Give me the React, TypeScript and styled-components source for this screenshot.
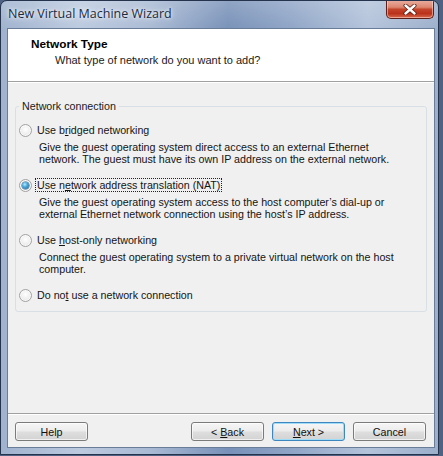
import React from "react";
import styled, { createGlobalStyle } from "styled-components";

const Global = createGlobalStyle`
  html, body { margin: 0; padding: 0; background: #4f6283; }
  body {
    width: 443px;
    height: 456px;
    overflow: hidden;
    font-family: "Open Sans", "Noto Sans", sans-serif;
    -webkit-font-smoothing: antialiased;
  }
`;

const UI_FONT = `"Liberation Sans", Arial, sans-serif`;
const FONT = "10.7px";

const Window = styled.div`
  width: 439px;
  height: 455px;
  box-sizing: border-box;
  border: 1px solid #25344c;
  border-radius: 7px 7px 0 0;
  background:
    linear-gradient(180deg, rgba(255,255,255,0.18) 0%, rgba(255,255,255,0) 30px),
    linear-gradient(90deg, #9fb2ce 0%, #bccadf 18%, #a9bad4 34%, #7891b8 52%, #8ea4c6 66%, #b3c3da 84%, #9cafcb 100%);
  display: flex;
  flex-direction: column;
  overflow: hidden;
`;

const TitleBar = styled.div`
  height: 27px;
  display: flex;
  align-items: flex-start;
  flex-shrink: 0;
`;

const TitleText = styled.div`
  padding-left: 7px;
  line-height: 26px;
  font-size: 12.5px;
  color: #1b2b3f;
  text-shadow: 0 0 6px rgba(255, 255, 255, 0.95), 0 0 3px rgba(255, 255, 255, 0.8);
  white-space: nowrap;
`;

const CloseButton = styled.div`
  width: 48px;
  height: 19px;
  margin: -1px 4px 0 auto;
  box-sizing: border-box;
  border: 1px solid #5a2019;
  border-top: none;
  border-radius: 0 0 5px 5px;
  background: linear-gradient(180deg, #eab0a2 0%, #dc8670 40%, #c4452b 52%, #b93219 75%, #d8694d 100%);
  box-shadow: inset 0 0 0 1px rgba(255, 220, 210, 0.55);
  display: flex;
  align-items: center;
  justify-content: center;
`;

const Client = styled.div`
  flex: 1;
  margin: 0 3px 6px 6px;
  border: 1px solid #6a7d98;
  background: #f0f0f0;
  display: flex;
  flex-direction: column;
  color: #141414;
  font-family: ${UI_FONT};
  font-size: ${FONT};
`;

const Header = styled.div`
  height: 52px;
  flex-shrink: 0;
  box-sizing: content-box;
  background: #ffffff;
  border-bottom: 1px solid #a0a0a0;
  box-shadow: 0 1px 0 #ffffff;
  display: flex;
  flex-direction: column;
`;

const HeaderTitle = styled.div`
  margin: 8px 0 0 23px;
  font-weight: 700;
  font-size: 11.8px;
  line-height: 14px;
  color: #000;
`;

const HeaderSub = styled.div`
  margin: 2px 0 0 47px;
  font-size: 11px;
  line-height: 14px;
  color: #1a1a1a;
`;

const Body = styled.div`
  flex: 1;
  padding: 18px 7px 0 7px;
  display: flex;
  flex-direction: column;
`;

const Group = styled.fieldset`
  margin: 0;
  border: 1px solid #d8dfe6;
  border-radius: 3px;
  padding: 11px 8px 9px 3px;
  min-width: 0;
`;

const Legend = styled.legend`
  padding: 0 3px;
  line-height: 12px;
  color: #1a1a1a;
`;

const Option = styled.div`
  display: flex;
  flex-direction: column;
  & + & {
    margin-top: 13px;
  }
`;

const OptionRow = styled.div`
  display: flex;
  align-items: center;
  height: 14px;
  gap: 4px;
`;

const Radio = styled.span<{ $checked?: boolean }>`
  width: 13px;
  height: 13px;
  box-sizing: border-box;
  border-radius: 50%;
  border: 1px solid #a2a2a2;
  background: radial-gradient(circle at 50% 40%, #ffffff 0%, #eeeeee 55%, #dcdcdc 100%);
  box-shadow: inset 0 0 0 1px rgba(255, 255, 255, 0.7);
  display: flex;
  align-items: center;
  justify-content: center;
  flex-shrink: 0;
  &::after {
    content: "";
    display: ${(p) => (p.$checked ? "block" : "none")};
    width: 7px;
    height: 7px;
    border-radius: 50%;
    background: radial-gradient(circle at 40% 35%, #b8ecfc 0%, #4aa8d8 40%, #1b5d94 100%);
    box-shadow: 0 0 0 0.5px #2a5f8c;
  }
`;

const OptionLabel = styled.span<{ $focused?: boolean }>`
  line-height: 12px;
  padding: 0 1px;
  white-space: nowrap;
  outline: ${(p) => (p.$focused ? "1px dotted #222" : "none")};
  outline-offset: 0;
`;

const Key = styled.u`
  text-decoration: underline;
  text-underline-offset: 1px;
`;

const Desc = styled.div`
  margin: 4px 0 0 20px;
  display: flex;
  flex-direction: column;
`;

const DescLine = styled.span`
  line-height: 12px;
  white-space: nowrap;
`;

const Footer = styled.div`
  flex-shrink: 0;
  border-top: 1px solid #a0a0a0;
  box-shadow: inset 0 1px 0 #ffffff;
  padding: 8px 8px 6px 7px;
  display: flex;
  align-items: center;
  gap: 8px;
`;

const Button = styled.div<{ $default?: boolean; $pushRight?: boolean }>`
  width: 73px;
  height: 19px;
  box-sizing: border-box;
  border: 1px solid ${(p) => (p.$default ? "#3d86be" : "#7b7b7b")};
  border-radius: 3px;
  background: linear-gradient(180deg, #f6f6f6 0%, #ececec 48%, #dedede 52%, #d3d3d3 100%);
  box-shadow: ${(p) =>
    p.$default
      ? "inset 0 0 0 1px #9fdcf7"
      : "inset 0 0 0 1px rgba(255,255,255,0.65)"};
  display: flex;
  align-items: center;
  justify-content: center;
  color: #111;
  line-height: 12px;
  white-space: pre;
  margin-left: ${(p) => (p.$pushRight ? "auto" : "0")};
`;

type Opt = {
  pre: string;
  key: string;
  post: string;
  desc: string[];
  checked?: boolean;
};

const options: Opt[] = [
  {
    pre: "Use b",
    key: "r",
    post: "idged networking",
    desc: [
      "Give the guest operating system direct access to an external Ethernet",
      "network. The guest must have its own IP address on the external network.",
    ],
  },
  {
    pre: "Use n",
    key: "e",
    post: "twork address translation (NAT)",
    desc: [
      "Give the guest operating system access to the host computer\u2019s dial-up or",
      "external Ethernet network connection using the host\u2019s IP address.",
    ],
    checked: true,
  },
  {
    pre: "Use ",
    key: "h",
    post: "ost-only networking",
    desc: [
      "Connect the guest operating system to a private virtual network on the host",
      "computer.",
    ],
  },
  {
    pre: "Do no",
    key: "t",
    post: " use a network connection",
    desc: [],
  },
];

const CloseIcon = () => (
  <svg width="14" height="11" viewBox="0 0 14 11">
    <path d="M2.5 1.5 L11.5 9.5 M11.5 1.5 L2.5 9.5" stroke="#5a1a10" strokeWidth="4" strokeLinecap="round" />
    <path d="M2.5 1.5 L11.5 9.5 M11.5 1.5 L2.5 9.5" stroke="#ffffff" strokeWidth="2.4" strokeLinecap="round" />
  </svg>
);

export default function App() {
  return (
    <>
      <Global />
      <Window>
        <TitleBar>
          <TitleText>New Virtual Machine Wizard</TitleText>
          <CloseButton>
            <CloseIcon />
          </CloseButton>
        </TitleBar>
        <Client>
          <Header>
            <HeaderTitle>Network Type</HeaderTitle>
            <HeaderSub>What type of network do you want to add?</HeaderSub>
          </Header>
          <Body>
            <Group>
              <Legend>Network connection</Legend>
              {options.map((o) => (
                <Option key={o.pre + o.post}>
                  <OptionRow>
                    <Radio $checked={o.checked} />
                    <OptionLabel $focused={o.checked}>
                      {o.pre}
                      <Key>{o.key}</Key>
                      {o.post}
                    </OptionLabel>
                  </OptionRow>
                  {o.desc.length > 0 && (
                    <Desc>
                      {o.desc.map((d) => (
                        <DescLine key={d}>{d}</DescLine>
                      ))}
                    </Desc>
                  )}
                </Option>
              ))}
            </Group>
          </Body>
          <Footer>
            <Button>Help</Button>
            <Button $pushRight>
              {"< "}
              <Key>B</Key>
              {"ack"}
            </Button>
            <Button $default>
              <Key>N</Key>
              {"ext >"}
            </Button>
            <Button>Cancel</Button>
          </Footer>
        </Client>
      </Window>
    </>
  );
}
